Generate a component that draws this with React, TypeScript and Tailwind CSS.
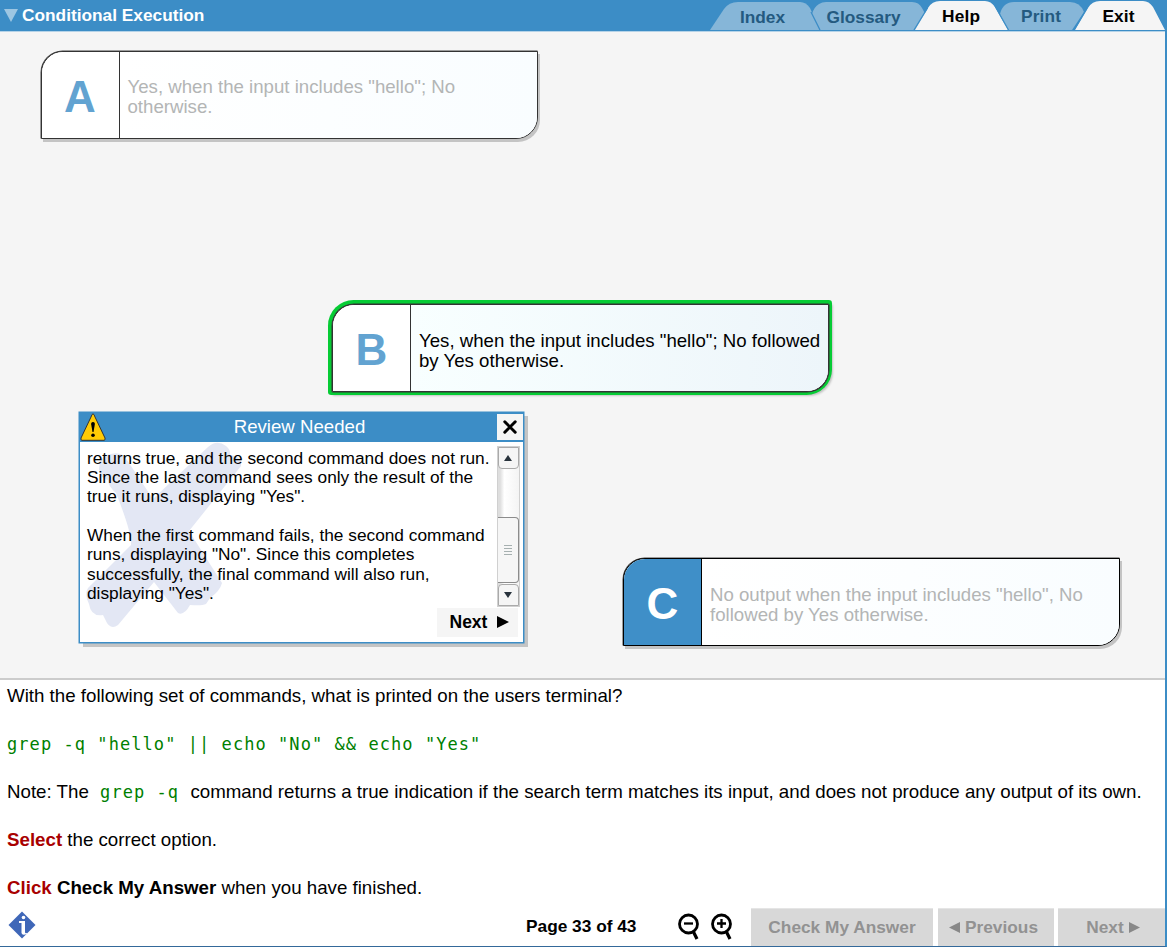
import React from "react";

type OptionProps = {
  letter: string;
  text: string;
  active?: boolean;
  place: string;
  letterBox?: string;
  line?: string;
};

function Option({ letter, text, active, place, letterBox = "bg-white text-[#62a3d1]", line = "border-[#333]" }: OptionProps) {
  return (
    <div
      className={`absolute flex h-[88px] w-[497px] overflow-hidden rounded-tl-[22px] rounded-br-[22px] border ${line} bg-white ${
        active
          ? "rounded-tr-[1px] rounded-bl-[1px] shadow-[0_0_0_0.5px_#333,-0.5px_-0.5px_0_3.5px_#06cc35,2px_2px_2px_2px_#c4c4c4]"
          : "shadow-[-0.5px_-0.5px_0_0_#444,2px_3px_0_#c4c4c4]"
      } ${place}`}
    >
      <div className={`flex w-[78px] shrink-0 items-center justify-center border-r pt-[4px] text-[44px] leading-none font-bold ${line} ${letterBox}`}>
        {letter}
      </div>
      <div
        className={`flex grow items-center bg-linear-to-r pt-[5px] pl-2 text-[18.650px] leading-[19.600px] whitespace-pre ${
          active ? "from-[#f8ffff] to-[#edf5fa] text-black" : "from-white to-[#f9fdff] text-[#b3b5b5]"
        }`}
      >
        {text}
      </div>
    </div>
  );
}

function Tabs() {
  return (
    <svg className="h-[32px] w-[457px]" viewBox="710 0 457 32" fontFamily="Liberation Sans, sans-serif" fontWeight="bold" fontSize="17.300" textAnchor="middle">
      <g fill="#86b6d8">
        <path d="M710 30L724 9Q729 2 738 2H800Q806 2 810 8L820 30Z" />
        <path d="M820 30L812 14Q814 7 819 4Q822 2 826 2H912Q919 2 922 8L934 30Z" />
        <path d="M1007 30L1000 14Q1003 2 1014 2H1070Q1080 2 1084 12L1072 30Z" />
      </g>
      <g fill="#f5f5f5">
        <path d="M915 30L928 8Q932 1 940 1H985Q991 1 995 7L1008 30Z" />
        <path d="M1075 30L1088 8Q1092 1 1100 1H1143Q1149 1 1153 7L1165 30Z" />
      </g>
      <path d="M820 30L811 12M914 30L927.500 8M1008.500 30L995 6M1074 30L1087 8" stroke="#3c8dc6" strokeWidth="1.300" fill="none" />
      <path d="M710 30.500H1165" stroke="#3c8dc6" />
      <g fill="#245a80">
        <text x="762.500" y="23" textLength="45">Index</text>
        <text x="863.500" y="23" textLength="74">Glossary</text>
        <text x="1041" y="22.400" textLength="40">Print</text>
      </g>
      <text x="961" y="22.400" textLength="38">Help</text>
      <text x="1118.500" y="22.400" textLength="32">Exit</text>
    </svg>
  );
}

function ScrollBar() {
  return (
    <div className="flex h-[161px] w-[23px] flex-col border border-[#d0d0d0] bg-linear-to-r from-[#dedede] from-10% via-white via-30% to-[#f4f4f4]">
      <div className="flex h-[22px] items-center justify-center rounded-b border border-[#aaa] bg-[#f5f5f5]">
        <svg width="8" height="6"><path d="M0 6L4 0L8 6Z" fill="#28323c" /></svg>
      </div>
      <div className="grow" />
      <div className="flex h-[66px] flex-col items-center justify-center gap-[2px] rounded-r border border-l-0 border-[#8c8c8c] bg-[#f6f6f6]">
        <div className="h-px w-2 bg-[#a6b0b0]" />
        <div className="h-px w-2 bg-[#a6b0b0]" />
        <div className="h-px w-2 bg-[#a6b0b0]" />
        <div className="h-px w-2 bg-[#a6b0b0]" />
      </div>
      <div className="mt-px flex h-[22px] items-center justify-center rounded-t border border-[#aaa] bg-[#f5f5f5]">
        <svg width="8" height="6"><path d="M0 0L4 6L8 0Z" fill="#28323c" /></svg>
      </div>
    </div>
  );
}

const review = `returns true, and the second command does not run.
Since the last command sees only the result of the
true it runs, displaying "Yes".

When the first command fails, the second command
runs, displaying "No". Since this completes
successfully, the final command will also run,
displaying "Yes".`;

function ReviewWindow() {
  return (
    <section className="absolute top-[379.500px] left-[78.500px] flex h-[231px] w-[445px] flex-col border border-[#3c8dc6] bg-white shadow-[0_0_0_0.5px_#3c8dc6,4px_4px_0_#c4c4c4]">
      <header className="flex h-[28px] shrink-0 items-center bg-[#3c8dc6]">
        <svg width="26" height="28" viewBox="0 0 26 28">
          <path d="M13 .8Q14 .8 15 4L25 25Q25.500 27.300 24 27.300H2Q.5 27.300 1 25L11 4Q12 .8 13 .8Z" fill="#ffcb05" stroke="#333" />
          <path d="M13 9Q15.200 9 14.800 11.500L13.500 19H12.500L11.200 11.500Q10.800 9 13 9Z" />
          <circle cx="13" cy="22.300" r="1.800" />
        </svg>
        <h2 className="grow pr-[3px] text-center text-[18.650px] text-white">Review Needed</h2>
        <button className="flex h-[26px] w-[26px] items-center justify-center bg-[#f5f5f5]">
          <svg width="14" height="14"><path d="M1.800 1.800L12.200 12.200M12.200 1.800L1.800 12.200" stroke="#000" strokeWidth="3" strokeLinecap="round" /></svg>
        </button>
      </header>
      <div className="relative flex grow border-t border-[#3c8dc6]">
        <svg className="absolute top-0 left-0" width="170" height="190" viewBox="80 441 170 190">
          <path fill="#e3e7f4" d="M99 468Q100 454 111 453Q122 450 127 459L153 498L208 446Q217 438 226 445Q231 449 230 454Q242 455 241 465L189 530L222 582Q220 590 210 597L206 603Q202 605 190 604Q184 615 178 612L154 581L118 624Q110 630 105 618L103 614Q91 616 89 603Q84 593 88 587L131 544Q132 532 116 492Q108 485 108 479Q99 477 99 468Z" />
        </svg>
        <p className="relative w-[417px] shrink-0 pt-[7px] pl-[7.500px] text-[17.300px] leading-[19.350px] whitespace-pre text-black">{review}</p>
        <div className="pt-[4px]"><ScrollBar /></div>
        <button className="absolute right-[5px] bottom-[5px] flex h-[29px] w-[81px] items-center gap-[10px] bg-[#f5f5f5] pl-[13px] text-[17.500px] font-bold">
          Next
          <svg width="12" height="12"><path d="M0 0L12 6L0 12Z" /></svg>
        </button>
      </div>
    </section>
  );
}

function Magnifier({ plus }: { plus?: boolean }) {
  return (
    <svg width="24" height="28" viewBox="0 0 24 28" fill="none" stroke="#000">
      <circle cx="11.500" cy="11" r="9" strokeWidth="2.800" />
      <path d="M16 18L20 26" strokeWidth="3.200" />
      <path d={plus ? "M7 10.500H16M11.500 6V15" : "M7 10.500H16"} strokeWidth="2.300" />
    </svg>
  );
}

function Code({ children }: { children: string }) {
  return <code className="font-['DejaVu_Sans_Mono',monospace] text-[17px] leading-none tracking-[1.060px] text-[#008000]">{children}</code>;
}

export default function App() {
  return (
    <div className="flex h-[947px] w-[1167px] flex-col overflow-hidden border-r-2 border-b border-r-[#3c8dc6] border-b-[#34699a] bg-[#f5f5f5] font-['Liberation_Sans',sans-serif]">
      <header className="flex h-[32px] shrink-0 items-start justify-between border-b border-[#b5d3e8] bg-[#3c8dc6]">
        <div className="flex items-center gap-[4px] pt-[2px] pl-[4px]">
          <svg width="14" height="13"><path d="M0 0H14L7 13Z" fill="#9dc6e2" /></svg>
          <h1 className="text-[17.300px] leading-[27px] font-bold text-white">Conditional Execution</h1>
        </div>
        <div className="-mr-[2px]"><Tabs /></div>
      </header>

      <main className="relative h-[646px] shrink-0">
        <Option letter="A" place="top-[18.500px] left-[40.500px]" text={'Yes, when the input includes "hello"; No\notherwise.'} />
        <Option letter="B" active place="top-[272px] left-[332px]" text={'Yes, when the input includes "hello"; No followed\nby Yes otherwise.'} />
        <Option letter="C" place="top-[526px] left-[623px]" line="border-black" letterBox="bg-[#3f8fc8] text-white" text={'No output when the input includes "hello", No\nfollowed by Yes otherwise.'} />
        <ReviewWindow />
      </main>

      <section className="flex grow flex-col border-t-2 border-[#ccc] bg-white">
        <div className="flex flex-col gap-6 pt-[4px] pl-[7px] text-[18.720px] leading-6 whitespace-pre text-black">
          <p className="h-6">With the following set of commands, what is printed on the users terminal?</p>
          <p className="h-6"><Code>{'grep -q "hello" || echo "No" && echo "Yes"'}</Code></p>
          <p className="h-6">Note: The<Code>{" grep -q "}</Code>command returns a true indication if the search term matches its input, and does not produce any output of its own.</p>
          <p className="h-6"><b className="text-[#a80000]">Select</b> the correct option.</p>
          <p className="h-6"><b className="text-[#a80000]">Click</b> <b>Check My Answer</b> when you have finished.</p>
        </div>
        <footer className="mt-auto flex h-[38px] items-center text-[17.300px] font-bold">
          <svg className="mb-[4px] ml-[8px]" width="28" height="28" viewBox="0 0 28 28">
            <path d="M14 .5L27.500 14L14 27.500L.5 14Z" fill="#3f67b8" />
            <circle cx="15.500" cy="6.500" r="1.800" fill="#fff" />
            <path d="M11 10H17V21Q17 23 19 22V23Q14 25 13.500 22V12H11Z" fill="#fff" />
          </svg>
          <span className="ml-[490px] w-[151px] whitespace-nowrap">Page 33 of 43</span>
          <div className="flex gap-[9px] pb-[1px]"><Magnifier /><Magnifier plus /></div>
          <div className="ml-auto flex h-[38px] gap-[4px] text-[#929292]">
            <button className="mr-px w-[182px] border-t border-[#e5e5e5] bg-[#d8d8d8]">Check My Answer</button>
            <button className="flex w-[116px] items-center justify-center gap-[5px] border-t border-[#e5e5e5] bg-[#d8d8d8] pr-[5px]">
              <svg width="11" height="11"><path d="M11 0L0 5.500L11 11Z" fill="#888" /></svg>Previous
            </button>
            <button className="flex w-[107px] items-center justify-center gap-[5px] border-t border-[#e5e5e5] bg-[#d8d8d8] pl-[3px]">
              Next<svg width="11" height="11"><path d="M0 0L11 5.500L0 11Z" fill="#888" /></svg>
            </button>
          </div>
        </footer>
      </section>
    </div>
  );
}
